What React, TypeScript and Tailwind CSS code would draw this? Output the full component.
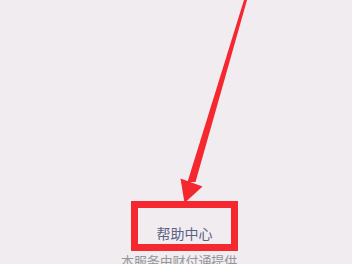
import React from "react";

export default function App() {
  return (
    <main
      className="relative h-[264px] w-[352px] overflow-hidden bg-[#f0ecf0]"
      style={{ fontFamily: '"Noto Sans CJK SC", "Noto Sans", sans-serif' }}
    >
      <div className="flex flex-col pt-[201px]">
        <div className="ml-[131px] flex h-[50px] w-[107px] items-end justify-center border-[7px] border-[#f4282e] pb-[1px]">
          <span className="text-[14px] leading-[20px] text-[#5b6283]">帮助中心</span>
        </div>
        <p className="ml-[121px] mt-[1px] text-[13px] leading-[18px] tracking-[-0.1px] text-[#96949a]">
          本服务由财付通提供
        </p>
      </div>

      {/* annotation arrow */}
      <svg
        className="pointer-events-none absolute left-0 top-0"
        width="352"
        height="264"
        viewBox="0 0 352 264"
      >
        <polygon points="244.6,-2 247.6,-2 195.5,182 187.5,182" fill="#f4282e" />
        <polygon points="180.5,178.5 202.5,186.5 184.5,203" fill="#f4282e" />
      </svg>
    </main>
  );
}
